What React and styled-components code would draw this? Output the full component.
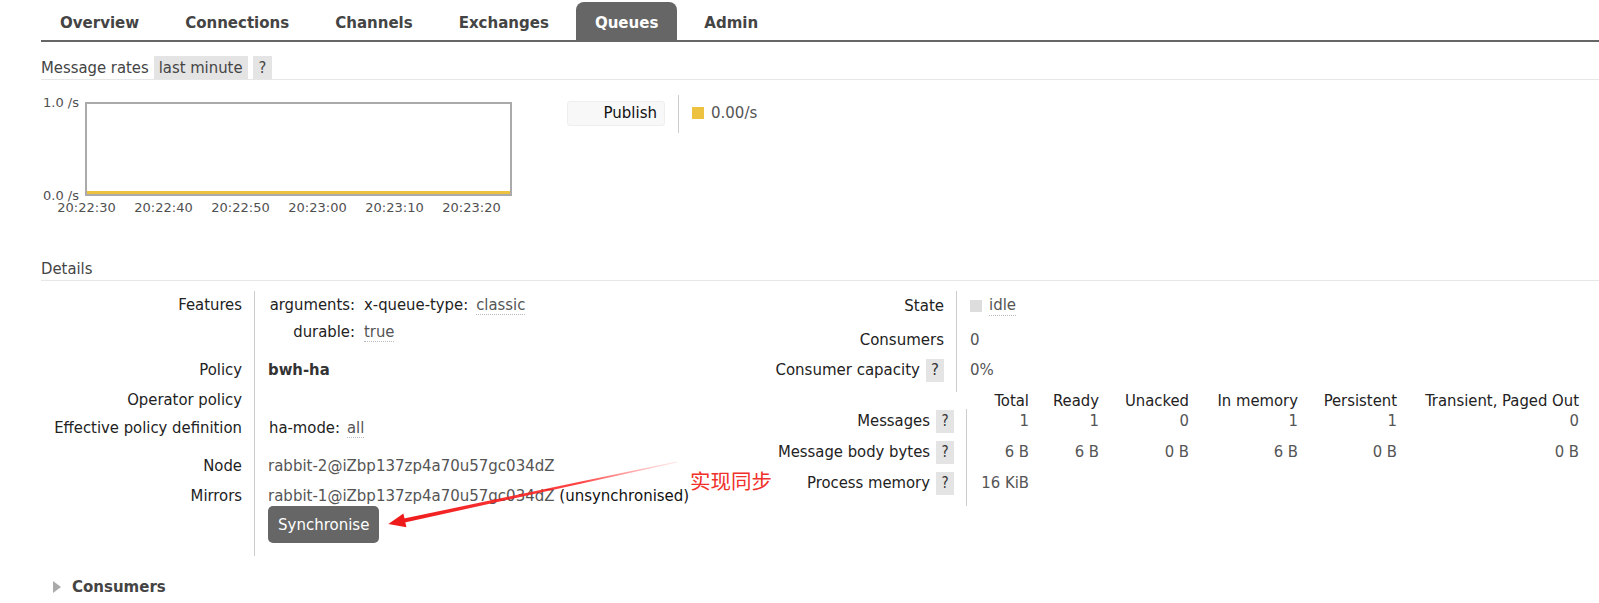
import React from 'react';
import styled, { createGlobalStyle, css } from 'styled-components';

const cond = css`
  font-family: "DejaVu Sans Condensed", "DejaVu Sans", sans-serif;
  font-stretch: condensed;
  font-size: 16.5px;
`;

const Global = createGlobalStyle`
  html, body { margin: 0; padding: 0; background: #fff; }
  body {
    font-family: "DejaVu Sans", Verdana, sans-serif;
    font-size: 15px;
    color: #222;
  }
`;

const Page = styled.div`
  position: relative;
  width: 1599px;
  height: 603px;
  overflow: hidden;
  box-sizing: border-box;
  padding: 2px 0 0 41px;
`;

/* ---------- tabs ---------- */
const Nav = styled.nav`
  display: flex;
  border-bottom: 2px solid #666;
`;
const Tab = styled.a`
  ${cond};
  font-size: 16.7px;
  font-weight: bold;
  height: 38px;
  line-height: 40px;
  padding: 0 19px;
  margin-right: 8px;
  border-radius: 8px 8px 0 0;
  text-decoration: none;
  color: ${p => (p.$active ? '#fff' : '#444')};
  background: ${p => (p.$active ? '#666' : 'transparent')};
`;

/* ---------- section headers ---------- */
const SectionHead = styled.div`
  ${cond};
  display: flex;
  align-items: center;
  height: 23px;
  margin-top: ${p => p.$mt}px;
  border-bottom: 1px solid #e6e6e6;
  color: #444;
`;
const Pill = styled.span`
  background: #e4e4e4;
  height: 23px;
  line-height: 23px;
  padding: 0 ${p => (p.$narrow ? 6 : 5)}px;
  margin-left: 5px;
`;

/* ---------- chart ---------- */
const ChartRow = styled.div`
  display: flex;
  align-items: flex-start;
  margin-top: 15px;
`;
const ChartBox = styled.div`
  position: relative;
  width: 471px;
`;
const YTick = styled.span`
  position: absolute;
  left: 2px;
  top: ${p => p.$top}px;
  font-size: 13px;
  line-height: 16px;
  color: #505050;
`;
const Plot = styled.div`
  margin: 7px 0 0 44px;
  width: 427px;
  height: 94px;
  box-sizing: border-box;
  border: 2px solid #aaa;
  display: flex;
  align-items: flex-end;
`;
const XAxis = styled.div`
  display: flex;
  margin: 4px 0 0 7px;
`;
const XTick = styled.span`
  width: 77px;
  text-align: center;
  font-size: 13px;
  line-height: 16px;
  color: #505050;
`;
const Legend = styled.div`
  display: flex;
  align-items: flex-start;
  margin-left: 55px;
`;
const LegendLabel = styled.div`
  margin-top: 6px;
  width: 98px;
  height: 25px;
  box-sizing: border-box;
  background: #f8f8f8;
  border: 1px solid #eee;
  border-radius: 3px;
  text-align: right;
  padding-right: 7px;
  line-height: 23px;
  color: #111;
`;
const LegendDivider = styled.div`
  width: 1px;
  height: 38px;
  background: #ccc;
  margin-left: 13px;
`;
const LegendValue = styled.div`
  display: flex;
  align-items: center;
  margin: 8px 0 0 13px;
  line-height: 20px;
  color: #555;
`;
const Swatch = styled.span`
  width: 12px;
  height: 12px;
  background: #edc240;
  margin-right: 7px;
`;

/* ---------- details ---------- */
const DetailsRow = styled.div`
  display: flex;
  margin-top: 10px;
`;
const LeftTable = styled.div`
  width: 720px;
`;
const RightCol = styled.div`
  display: flex;
  flex-direction: column;
`;
const Row = styled.div`
  display: flex;
  height: ${p => p.$h}px;
`;
const Label = styled.div`
  ${p => (p.$cond ? cond : css`font-size: 15px;`)};
  width: ${p => p.$w}px;
  box-sizing: border-box;
  padding: ${p => p.$pt ?? 4}px 12px 0 0;
  line-height: ${p => p.$lh ?? 20}px;
  display: flex;
  justify-content: flex-end;
  align-items: flex-start;
  color: #222;
`;
const Value = styled.div`
  flex: 1;
  border-left: 1px solid #ccc;
  padding: ${p => p.$pt ?? 4}px 0 0 13px;
  line-height: 20px;
  color: #555;
  display: flex;
  flex-direction: column;
  align-items: flex-start;
`;
const Help = styled.span`
  display: inline-block;
  width: 18px;
  height: 23px;
  line-height: 23px;
  margin: -1.5px 0 0 6px;
  text-align: center;
  background: #e4e4e4;
  color: #333;
  font-family: "DejaVu Sans", sans-serif;
  font-size: 15px;
`;
const KV = styled.div`
  ${cond};
  display: grid;
  grid-template-columns: ${p => (p.$key ? `${p.$key}px auto` : 'auto auto')};
  column-gap: ${p => p.$gap ?? 8}px;
  row-gap: 7px;
  margin-left: ${p => p.$ml ?? 0}px;
  align-items: start;
`;
const Key = styled.span`
  text-align: right;
  color: #222;
`;
const Dotted = styled.span`
  color: #555;
  justify-self: start;
  border-bottom: 1px dotted #bbb;
  line-height: 19px;
`;
const Strong = styled.span`
  ${cond};
  font-weight: bold;
  color: #333;
`;
const Plain = styled.span`
  color: ${p => (p.$dark ? '#111' : '#555')};
`;
const Button = styled.button`
  margin-top: 0;
  height: 37px;
  padding: 0 10px;
  background: #666;
  color: #fff;
  border: none;
  border-radius: 5px;
  font-family: "DejaVu Sans", sans-serif;
  font-size: 15px;
`;
const StateIcon = styled.span`
  display: inline-flex;
  align-items: center;
`;
const Square = styled.span`
  width: 12px;
  height: 12px;
  background: #ddd;
  margin-right: 7px;
`;
const Cells = styled.div`
  display: flex;
  border-left: 1px solid ${p => (p.$noBorder ? 'transparent' : '#ccc')};
  padding-top: ${p => p.$pt}px;
  line-height: ${p => p.$lh}px;
`;
const Cell = styled.span`
  ${cond};
  width: ${p => p.$w}px;
  text-align: right;
  color: ${p => (p.$head ? '#222' : '#555')};
`;

const Collapsed = styled.div`
  display: flex;
  align-items: center;
  margin: 21px 0 0 12px;
  height: 20px;
`;
const Triangle = styled.span`
  width: 0;
  height: 0;
  border-left: 8px solid #aaa;
  border-top: 6px solid transparent;
  border-bottom: 6px solid transparent;
  margin-right: 11px;
`;
const CollapsedTitle = styled.span`
  font-weight: bold;
  color: #444;
`;

/* ---------- annotation overlay ---------- */
const Overlay = styled.svg`
  position: absolute;
  left: 0;
  top: 0;
  pointer-events: none;
`;
const Note = styled.span`
  position: absolute;
  left: 690px;
  top: 467px;
  font-family: "Noto Sans CJK SC", sans-serif;
  font-size: 20.5px;
  line-height: 26px;
  color: #f0302a;
`;

const colW = [62, 70, 90, 109, 99, 182];
const heads = ['Total', 'Ready', 'Unacked', 'In memory', 'Persistent', 'Transient, Paged Out'];
const msgRows = [
  { label: 'Messages', vals: ['1', '1', '0', '1', '1', '0'], h: 31 },
  { label: 'Message body bytes', vals: ['6 B', '6 B', '0 B', '6 B', '0 B', '0 B'], h: 31 },
  { label: 'Process memory', vals: ['16 KiB', '', '', '', '', ''], h: 35 },
];
const xTicks = ['20:22:30', '20:22:40', '20:22:50', '20:23:00', '20:23:10', '20:23:20'];

export default function App() {
  return (
    <Page>
      <Global />
      <Nav>
        <Tab>Overview</Tab>
        <Tab>Connections</Tab>
        <Tab>Channels</Tab>
        <Tab>Exchanges</Tab>
        <Tab $active>Queues</Tab>
        <Tab>Admin</Tab>
      </Nav>

      <SectionHead $mt={14}>
        Message rates<Pill>last minute</Pill><Pill $narrow>?</Pill>
      </SectionHead>

      <ChartRow>
        <ChartBox>
          <YTick $top={0}>1.0 /s</YTick>
          <YTick $top={93}>0.0 /s</YTick>
          <Plot>
            <svg width="423" height="3" viewBox="0 0 423 3">
              <line x1="0" y1="1.5" x2="423" y2="1.5" stroke="#edc240" strokeWidth="3" />
            </svg>
          </Plot>
          <XAxis>
            {xTicks.map(t => <XTick key={t}>{t}</XTick>)}
          </XAxis>
        </ChartBox>
        <Legend>
          <LegendLabel>Publish</LegendLabel>
          <LegendDivider />
          <LegendValue><Swatch />0.00/s</LegendValue>
        </Legend>
      </ChartRow>

      <SectionHead $mt={41}>Details</SectionHead>

      <DetailsRow>
        <LeftTable>
          <Row $h={65}>
            <Label $w={213} $cond>Features</Label>
            <Value>
              <KV $key={88} $ml={-1} $gap={9}>
                <Key>arguments:</Key>
                <KV $gap={8}>
                  <Key>x-queue-type:</Key>
                  <Dotted>classic</Dotted>
                </KV>
                <Key>durable:</Key>
                <Dotted>true</Dotted>
              </KV>
            </Value>
          </Row>
          <Row $h={30}>
            <Label $w={213} $cond>Policy</Label>
            <Value><Strong>bwh-ha</Strong></Value>
          </Row>
          <Row $h={28}>
            <Label $w={213} $cond>Operator policy</Label>
            <Value />
          </Row>
          <Row $h={38}>
            <Label $w={213} $cond>Effective policy definition</Label>
            <Value>
              <KV $gap={7} $ml={1}>
                <Key>ha-mode:</Key>
                <Dotted>all</Dotted>
              </KV>
            </Value>
          </Row>
          <Row $h={30}>
            <Label $w={213} $cond>Node</Label>
            <Value><Plain>rabbit-2@iZbp137zp4a70u57gc034dZ</Plain></Value>
          </Row>
          <Row $h={74}>
            <Label $w={213} $cond>Mirrors</Label>
            <Value>
              <span>
                <Plain>rabbit-1@iZbp137zp4a70u57gc034dZ</Plain>
                <Plain $dark> (unsynchronised)</Plain>
              </span>
              <Button>Synchronise</Button>
            </Value>
          </Row>
        </LeftTable>

        <RightCol>
          <Row $h={34}>
            <Label $w={195} $pt={5}>State</Label>
            <Value $pt={5}>
              <StateIcon><Square /><Dotted>idle</Dotted></StateIcon>
            </Value>
          </Row>
          <Row $h={30}>
            <Label $w={195} $pt={5}>Consumers</Label>
            <Value $pt={5}>0</Value>
          </Row>
          <Row $h={37}>
            <Label $w={195} $pt={5}>Consumer capacity<Help>?</Help></Label>
            <Value $pt={5}>0%</Value>
          </Row>

          <Row $h={17}>
            <Label $w={205} $pt={0} $lh={17} />
            <Cells $noBorder $pt={0} $lh={17}>
              {heads.map((h, i) => <Cell key={h} $w={colW[i]} $head>{h}</Cell>)}
            </Cells>
          </Row>
          {msgRows.map(r => (
            <Row key={r.label} $h={r.h}>
              <Label $w={205} $cond $pt={2}>{r.label}<Help>?</Help></Label>
              <Cells $pt={2} $lh={20}>
                {r.vals.map((v, i) => <Cell key={i} $w={colW[i]}>{v}</Cell>)}
              </Cells>
            </Row>
          ))}
        </RightCol>
      </DetailsRow>

      <Collapsed>
        <Triangle />
        <CollapsedTitle>Consumers</CollapsedTitle>
      </Collapsed>

      <Overlay width="1599" height="603" viewBox="0 0 1599 603">
        <defs>
          <linearGradient id="shaft" x1="677" y1="462" x2="402" y2="521" gradientUnits="userSpaceOnUse">
            <stop offset="0" stopColor="#ff6b6b" stopOpacity="0.15" />
            <stop offset="0.35" stopColor="#f22" stopOpacity="0.85" />
            <stop offset="1" stopColor="#ee1b1b" />
          </linearGradient>
        </defs>
        <polygon points="677.1,462.5 676.9,461.5 401.6,519 402.4,523" fill="url(#shaft)" />
        <polygon points="388.3,523.9 406.4,527.2 403.4,513.6" fill="#ee1b1b" />
      </Overlay>
      <Note>实现同步</Note>
    </Page>
  );
}
